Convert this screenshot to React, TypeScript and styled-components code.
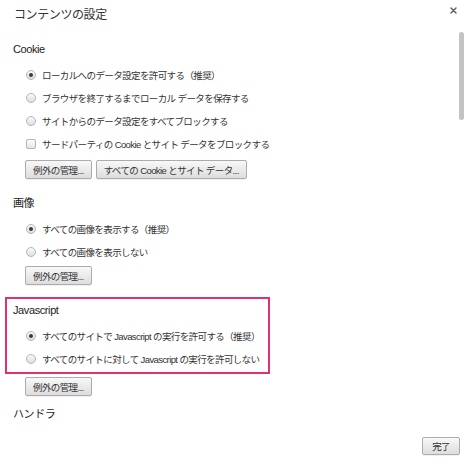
import * as React from 'react';
import styled, { createGlobalStyle } from 'styled-components';

const GlobalStyle = createGlobalStyle`
  html, body {
    margin: 0;
    padding: 0;
    background: #ffffff;
  }
  body {
    font-family: "Liberation Sans", "Noto Sans CJK JP", sans-serif;
    color: #303030;
  }
`;

const Dialog = styled.div`
  width: 474px;
  height: 464px;
  display: flex;
  flex-direction: column;
  background: #ffffff;
  overflow: hidden;
`;

const Header = styled.header`
  height: 30px;
  display: flex;
  align-items: flex-start;
  justify-content: space-between;
  padding: 0 17px 0 14px;
  box-sizing: border-box;
`;

const Title = styled.h1`
  margin: 7px 0 0;
  font-size: 12px;
  line-height: 16px;
  font-weight: 400;
  letter-spacing: -0.4px;
  color: #333;
`;

const CloseButton = styled.button`
  margin-top: 7px;
  padding: 0;
  border: none;
  background: none;
  width: 7px;
  height: 7px;
  display: flex;
  cursor: pointer;
`;

const Body = styled.div`
  flex: 1;
  display: flex;
  min-height: 0;
`;

const Content = styled.div`
  flex: 1;
  padding-left: 13px;
`;

const ScrollTrack = styled.div`
  width: 15px;
  flex: none;
`;

const ScrollThumb = styled.div`
  margin-top: 2px;
  width: 5px;
  height: 88px;
  border-radius: 3px;
  background: #c3c3c3;
`;

const Section = styled.section<{ $highlight?: boolean }>`
  margin-top: ${p => (p.$highlight ? '12px' : '0')};
  margin-left: ${p => (p.$highlight ? '-8px' : '0')};
  width: ${p => (p.$highlight ? '265px' : 'auto')};
  box-sizing: border-box;
  padding: ${p => (p.$highlight ? '3px 0 2px 6px' : '0')};
  border: ${p => (p.$highlight ? '2px solid #e4306c' : 'none')};
`;

const Heading = styled.h2<{ $gap: number }>`
  margin: ${p => p.$gap}px 0 0;
  font-size: 11px;
  line-height: 16px;
  font-weight: 400;
  letter-spacing: -0.4px;
  color: #222;
`;

const OptionList = styled.div`
  margin-top: 6px;
  padding-left: 13px;
  display: flex;
  flex-direction: column;
`;

const Option = styled.label`
  height: 23px;
  display: flex;
  align-items: center;
  gap: 6px;
  font-size: 9.5px;
  letter-spacing: -0.6px;
  color: #333;
  white-space: nowrap;
`;

const Radio = styled.span<{ $checked?: boolean }>`
  width: 10px;
  height: 10px;
  box-sizing: border-box;
  border-radius: 50%;
  border: 1px solid #b4b4b4;
  background: linear-gradient(#fafafa, #dedede);
  display: flex;
  align-items: center;
  justify-content: center;
  flex: none;

  &::after {
    content: '';
    width: 4px;
    height: 4px;
    border-radius: 50%;
    background: ${p => (p.$checked ? '#3a3a3a' : 'transparent')};
  }
`;

const Checkbox = styled.span`
  width: 10px;
  height: 10px;
  box-sizing: border-box;
  border-radius: 2px;
  border: 1px solid #b4b4b4;
  background: linear-gradient(#fdfdfd, #e6e6e6);
  flex: none;
`;

const ButtonRow = styled.div<{ $gap: number }>`
  margin-top: ${p => p.$gap}px;
  padding-left: 12px;
  display: flex;
  gap: 4px;
`;

const Button = styled.button`
  height: 19px;
  padding: 0 7px;
  border: 1px solid #acacac;
  border-radius: 2px;
  background: linear-gradient(#f8f8f8, #dddddd);
  box-shadow: 0 1px 0 rgba(0, 0, 0, 0.06);
  font-family: "Liberation Sans", "Noto Sans CJK JP", sans-serif;
  font-size: 9.5px;
  letter-spacing: -0.6px;
  color: #333;
  white-space: nowrap;
`;

const Footer = styled.footer`
  height: 36px;
  display: flex;
  justify-content: flex-end;
  align-items: flex-start;
  padding: 9px 14px 0 0;
  box-sizing: border-box;
`;

const DoneButton = styled(Button)`
  height: 18px;
  padding: 0 9px;
`;

export default function App() {
  return (
    <>
      <GlobalStyle />
      <Dialog>
        <Header>
          <Title>コンテンツの設定</Title>
          <CloseButton aria-label="閉じる">
            <svg width="7" height="7" viewBox="0 0 7 7">
              <path d="M1 1 L6 6 M6 1 L1 6" stroke="#5a5a5a" strokeWidth="1.4" strokeLinecap="round" />
            </svg>
          </CloseButton>
        </Header>
        <Body>
          <Content>
            <Heading $gap={11}>Cookie</Heading>
            <OptionList>
              <Option><Radio $checked />ローカルへのデータ設定を許可する（推奨）</Option>
              <Option><Radio />ブラウザを終了するまでローカル データを保存する</Option>
              <Option><Radio />サイトからのデータ設定をすべてブロックする</Option>
              <Option><Checkbox />サードパーティの Cookie とサイト データをブロックする</Option>
            </OptionList>
            <ButtonRow $gap={5}>
              <Button>例外の管理...</Button>
              <Button>すべての Cookie とサイト データ...</Button>
            </ButtonRow>

            <Heading $gap={16}>画像</Heading>
            <OptionList>
              <Option><Radio $checked />すべての画像を表示する（推奨）</Option>
              <Option><Radio />すべての画像を表示しない</Option>
            </OptionList>
            <ButtonRow $gap={3}>
              <Button>例外の管理...</Button>
            </ButtonRow>

            <Section $highlight>
              <Heading $gap={0}>Javascript</Heading>
              <OptionList>
                <Option><Radio $checked />すべてのサイトで Javascript の実行を許可する（推奨）</Option>
                <Option><Radio />すべてのサイトに対して Javascript の実行を許可しない</Option>
              </OptionList>
            </Section>
            <ButtonRow $gap={3}>
              <Button>例外の管理...</Button>
            </ButtonRow>

            <Heading $gap={10}>ハンドラ</Heading>
          </Content>
          <ScrollTrack>
            <ScrollThumb />
          </ScrollTrack>
        </Body>
        <Footer>
          <DoneButton>完了</DoneButton>
        </Footer>
      </Dialog>
    </>
  );
}
